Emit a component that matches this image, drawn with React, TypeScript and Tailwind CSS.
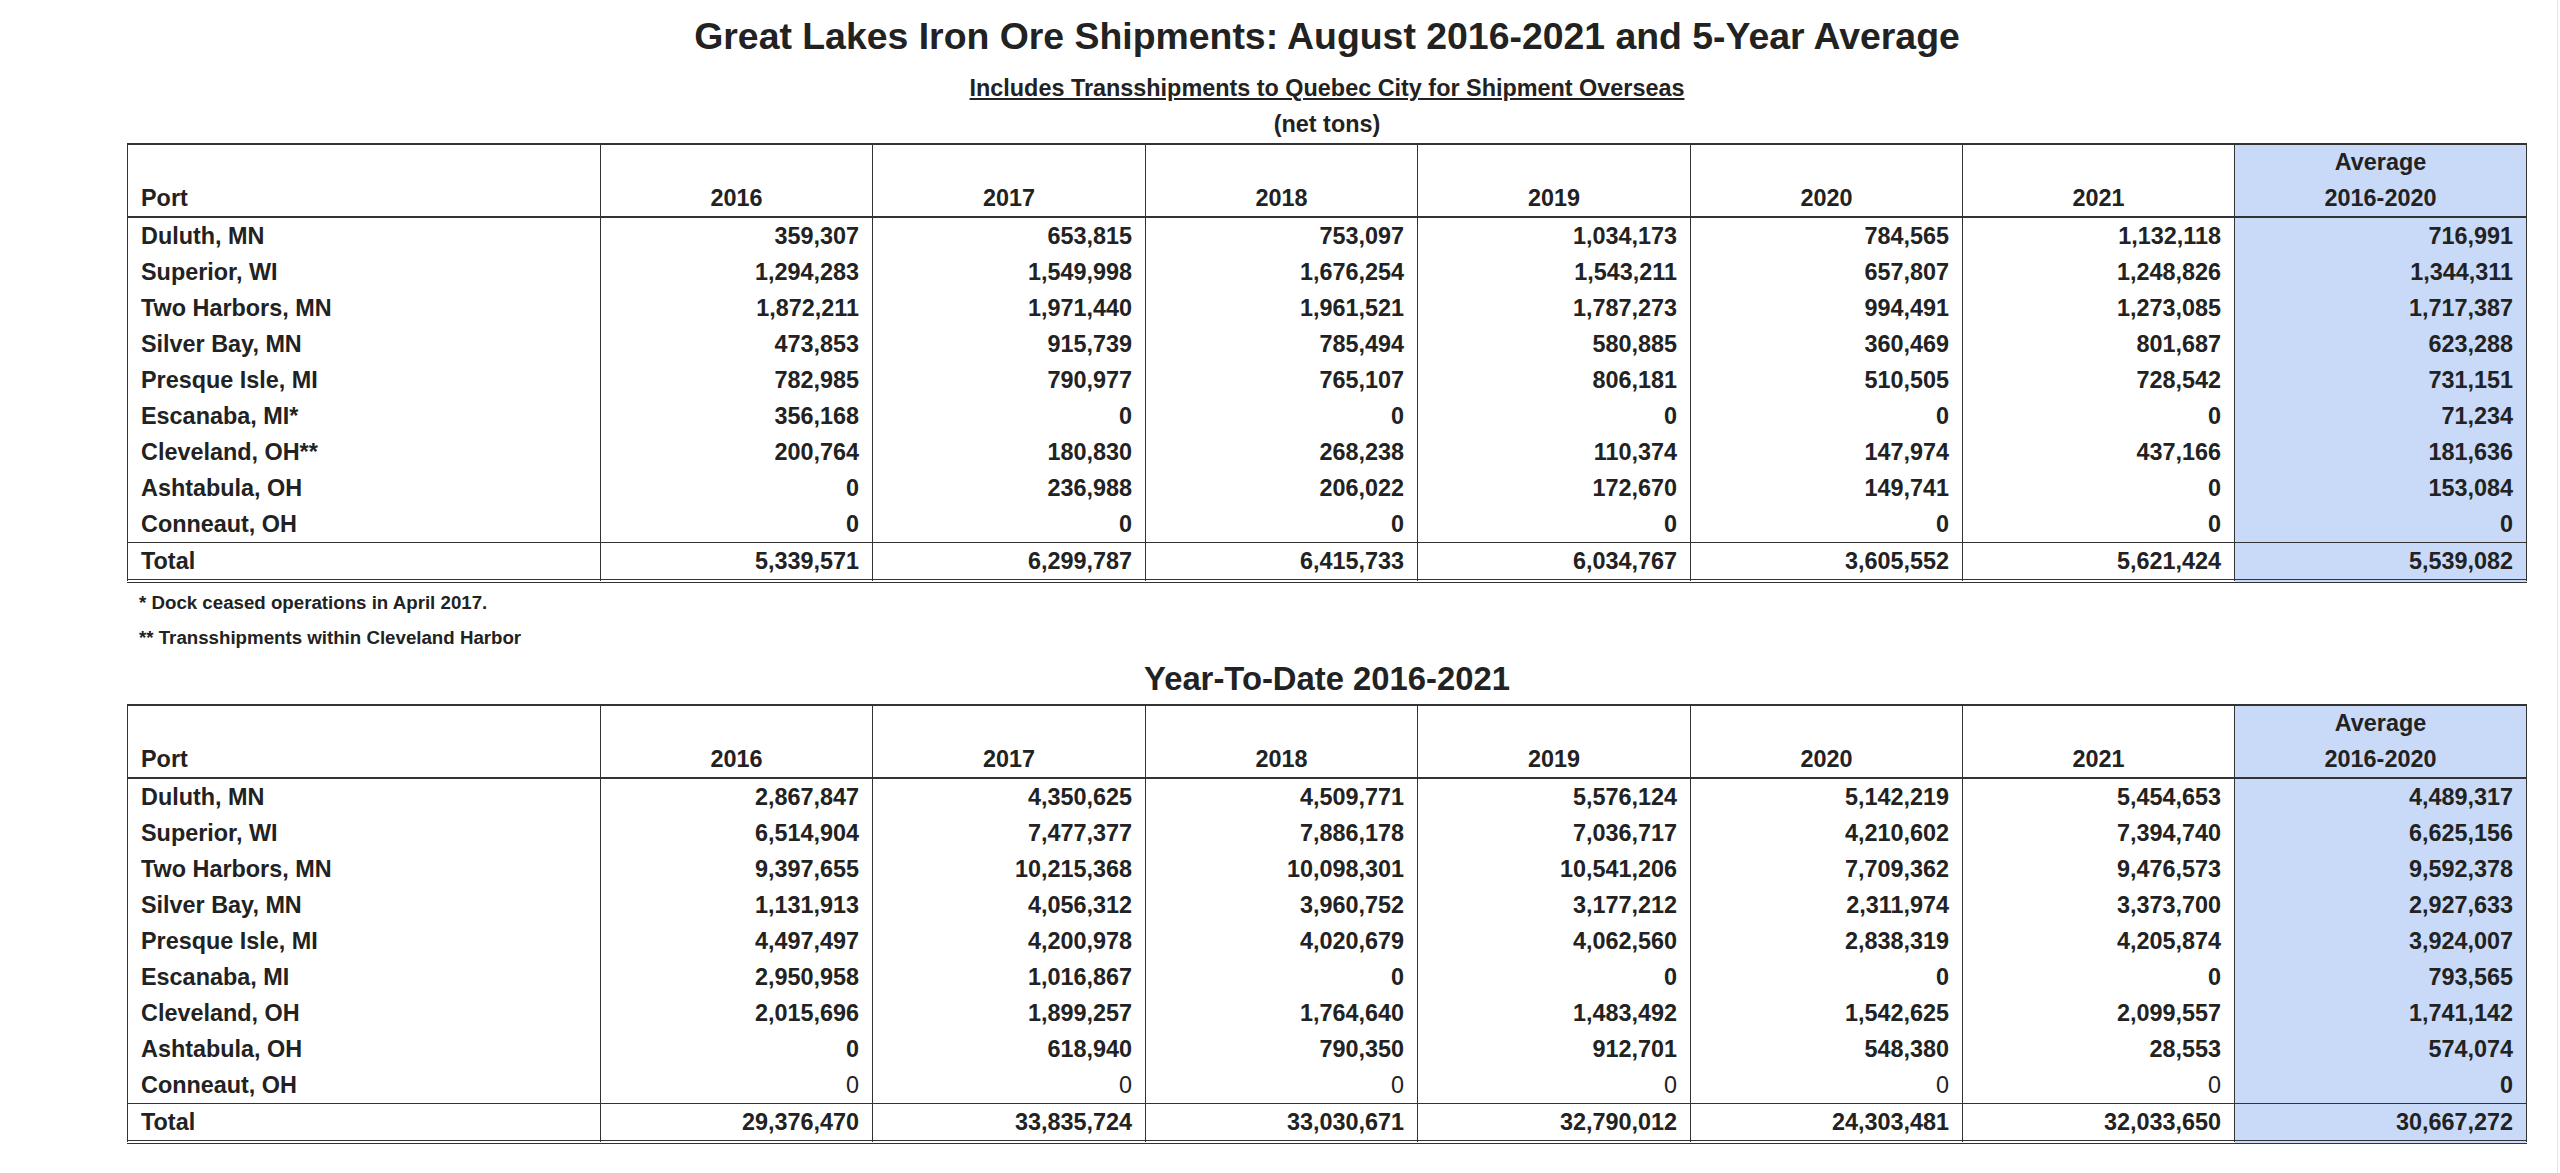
import React from 'react';

/**
 * Great Lakes iron ore shipment report — two spreadsheet-style tables
 * (month + year-to-date) with a shaded 5-year average column.
 */

interface Row {
  port: string;
  values: string[];
  avg: string;
  plain?: boolean;
}

const YEARS = ['2016', '2017', '2018', '2019', '2020', '2021'];
const YEAR_WIDTHS = ['w-[272px]', 'w-[273px]', 'w-[272px]', 'w-[273px]', 'w-[272px]', 'w-[272px]'];

const august: Row[] = [
  { port: 'Duluth, MN', values: ['359,307', '653,815', '753,097', '1,034,173', '784,565', '1,132,118'], avg: '716,991' },
  { port: 'Superior, WI', values: ['1,294,283', '1,549,998', '1,676,254', '1,543,211', '657,807', '1,248,826'], avg: '1,344,311' },
  { port: 'Two Harbors, MN', values: ['1,872,211', '1,971,440', '1,961,521', '1,787,273', '994,491', '1,273,085'], avg: '1,717,387' },
  { port: 'Silver Bay, MN', values: ['473,853', '915,739', '785,494', '580,885', '360,469', '801,687'], avg: '623,288' },
  { port: 'Presque Isle, MI', values: ['782,985', '790,977', '765,107', '806,181', '510,505', '728,542'], avg: '731,151' },
  { port: 'Escanaba, MI*', values: ['356,168', '0', '0', '0', '0', '0'], avg: '71,234' },
  { port: 'Cleveland, OH**', values: ['200,764', '180,830', '268,238', '110,374', '147,974', '437,166'], avg: '181,636' },
  { port: 'Ashtabula, OH', values: ['0', '236,988', '206,022', '172,670', '149,741', '0'], avg: '153,084' },
  { port: 'Conneaut, OH', values: ['0', '0', '0', '0', '0', '0'], avg: '0' },
];
const augustTotal: Row = {
  port: 'Total',
  values: ['5,339,571', '6,299,787', '6,415,733', '6,034,767', '3,605,552', '5,621,424'],
  avg: '5,539,082',
};

const ytd: Row[] = [
  { port: 'Duluth, MN', values: ['2,867,847', '4,350,625', '4,509,771', '5,576,124', '5,142,219', '5,454,653'], avg: '4,489,317' },
  { port: 'Superior, WI', values: ['6,514,904', '7,477,377', '7,886,178', '7,036,717', '4,210,602', '7,394,740'], avg: '6,625,156' },
  { port: 'Two Harbors, MN', values: ['9,397,655', '10,215,368', '10,098,301', '10,541,206', '7,709,362', '9,476,573'], avg: '9,592,378' },
  { port: 'Silver Bay, MN', values: ['1,131,913', '4,056,312', '3,960,752', '3,177,212', '2,311,974', '3,373,700'], avg: '2,927,633' },
  { port: 'Presque Isle, MI', values: ['4,497,497', '4,200,978', '4,020,679', '4,062,560', '2,838,319', '4,205,874'], avg: '3,924,007' },
  { port: 'Escanaba, MI', values: ['2,950,958', '1,016,867', '0', '0', '0', '0'], avg: '793,565' },
  { port: 'Cleveland, OH', values: ['2,015,696', '1,899,257', '1,764,640', '1,483,492', '1,542,625', '2,099,557'], avg: '1,741,142' },
  { port: 'Ashtabula, OH', values: ['0', '618,940', '790,350', '912,701', '548,380', '28,553'], avg: '574,074' },
  { port: 'Conneaut, OH', values: ['0', '0', '0', '0', '0', '0'], avg: '0', plain: true },
];
const ytdTotal: Row = {
  port: 'Total',
  values: ['29,376,470', '33,835,724', '33,030,671', '32,790,012', '24,303,481', '32,033,650'],
  avg: '30,667,272',
};

function ShipmentTable({ rows, total }: { rows: Row[]; total: Row }) {
  const th = 'border-r border-t-2 border-b-2 border-[#333] px-[13px] align-bottom leading-[35.5px] font-bold';
  const td = 'border-r border-[#333] px-[13px] leading-[36px] whitespace-nowrap';
  const tot = 'border-r border-t border-b-[4px] [border-bottom-style:double] border-[#333] px-[13px] leading-[36px] whitespace-nowrap';

  return (
    <table className="table-fixed border-separate border-spacing-0 w-[2400px] text-[23.4px] font-bold">
      <thead>
        <tr>
          <th className={`${th} border-l w-[474px] text-left`}>Port</th>
          {YEARS.map((y, i) => (
            <th key={y} className={`${th} ${YEAR_WIDTHS[i]} text-center`}>
              {y}
            </th>
          ))}
          <th className={`${th} w-[292px] text-center bg-[#c9daf8]`}>
            <div>Average</div>
            <div>2016-2020</div>
          </th>
        </tr>
      </thead>
      <tbody>
        {rows.map((r) => (
          <tr key={r.port}>
            <td className={`${td} border-l text-left`}>{r.port}</td>
            {r.values.map((v, i) => (
              <td key={i} className={`${td} text-right ${r.plain ? 'font-normal' : ''}`}>
                {v}
              </td>
            ))}
            <td className={`${td} text-right bg-[#c9daf8]`}>{r.avg}</td>
          </tr>
        ))}
        <tr>
          <td className={`${tot} border-l text-left`}>{total.port}</td>
          {total.values.map((v, i) => (
            <td key={i} className={`${tot} text-right`}>
              {v}
            </td>
          ))}
          <td className={`${tot} text-right bg-[#c9daf8]`}>{total.avg}</td>
        </tr>
      </tbody>
    </table>
  );
}

export default function App() {
  return (
    <div className="flex min-h-screen bg-white text-[#222] font-['Liberation_Sans',Arial,sans-serif]">
      <main className="flex-1 pl-[127px]">
        <div className="w-[2400px] flex flex-col">
          <h1 className="pt-[15px] text-center text-[37.4px] leading-[42px] font-bold">
            Great Lakes Iron Ore Shipments: August 2016-2021 and 5-Year Average
          </h1>
          <p className="mt-[13px] text-center text-[23.4px] leading-[36px] font-bold">
            <span className="underline">Includes Transshipments to Quebec City for Shipment Overseas</span>
          </p>
          <p className="text-center text-[23.4px] leading-[36px] font-bold">(net tons)</p>

          <div className="mt-[1px]">
            <ShipmentTable rows={august} total={augustTotal} />
          </div>

          <div className="mt-[2px] pl-[12px] text-[18.7px] leading-[35px] font-bold">
            <p>* Dock ceased operations in April 2017.</p>
            <p>** Transshipments within Cleveland Harbor</p>
          </div>

          <h2 className="mt-[4px] text-center text-[32.8px] leading-[40px] font-bold">Year-To-Date 2016-2021</h2>

          <div className="mt-[5px]">
            <ShipmentTable rows={ytd} total={ytdTotal} />
          </div>
        </div>
      </main>
      <div className="w-[3px] border-l border-[#e3e3e3]" />
    </div>
  );
}
